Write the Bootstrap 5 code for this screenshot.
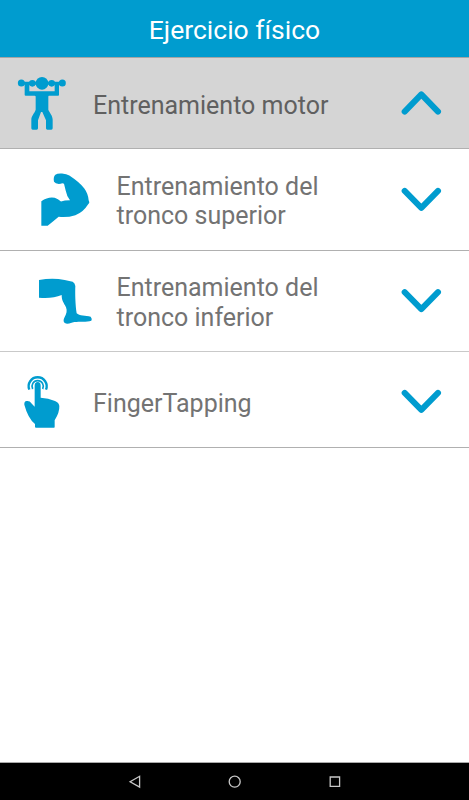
<!DOCTYPE html>
<html lang="es">
<head>
<meta charset="utf-8">
<meta name="viewport" content="width=device-width, initial-scale=1">
<title>Ejercicio físico</title>
<link rel="stylesheet" href="https://cdn.jsdelivr.net/npm/bootstrap@5.3.0/dist/css/bootstrap.min.css">
<style>
  :root { --brand: #009ccf; }
  body { font-family: Roboto, "Liberation Sans", sans-serif; background: #fff; }
  .app-title { height: 58px; background: var(--brand); border-bottom: 1px solid #a5a5a5; font-size: 26.5px; line-height: 30px; padding-top: 3px; }
  .menu-row { border-bottom: 1px solid #b0b0b0; font-size: 25px; line-height: 29.5px; color: #737373; padding: 0 18px 0 10px; }
  .menu-row svg { fill: var(--brand); flex: none; }
  .row-open { height: 91px; background: #d5d5d5; color: #606060; }
  .row-sub { height: 102px; padding-left: 32px; }
  .row-sub-last { height: 101px; border-bottom-color: #c9c9c9; }
  .row-last { height: 96px; padding-top: 4px; padding-left: 16px; }
  .row-open .menu-label { margin-left: 19px; padding-top: 5px; }
  .row-sub .menu-label { margin-left: 18.5px; width: 240px; padding-top: 3px; }
  .row-last .menu-label { margin-left: 23px; padding-top: 5px; }
  .menu-row svg.chevron { fill: none; stroke: var(--brand); stroke-width: 18; stroke-linecap: round; stroke-linejoin: round; }
  .sys-nav { height: 38px; background: #000; border-top: 1px solid #aaa; }
  .sys-nav svg { fill: none; stroke: #c8c8c8; stroke-width: 1.3; }
</style>
</head>
<body>
<div class="d-flex flex-column vh-100 overflow-hidden">
  <header class="app-title d-flex align-items-center justify-content-center text-white flex-shrink-0">Ejercicio físico</header>
  <main class="flex-grow-1">
    <div class="menu-row row-open d-flex align-items-center">
      <svg width="64" height="70" viewBox="0 -1 192 210">
        <ellipse cx="96" cy="45" rx="19" ry="19"/>
        <circle cx="34" cy="44" r="10.5"/><circle cx="67" cy="45" r="10"/>
        <circle cx="125" cy="45" r="10"/><circle cx="157" cy="44" r="10.5"/>
        <path d="M34 40h124v9H147V80q0 2-3 2H117q-2 0-2 3v39c4 9 13 18 13 30v26q0 4-4 4h-12q-4 0-4-4v-24L97 131h-4L84 156v24q0 4-4 4H68q-4 0-4-4v-26c0-12 9-18 13-30V85q0-3-3-3H47q-3 0-3-3V49H34zM58 49V69H134V49z"/>
      </svg>
      <span class="menu-label">Entrenamiento motor</span>
      <svg class="chevron ms-auto" width="60" height="50" viewBox="0 -4 180 150"><path d="M41 97 91 45l50 52"/></svg>
    </div>
    <div class="menu-row row-sub d-flex align-items-center">
      <svg width="66" height="66" viewBox="0 4.5 198 198">
        <path d="M28 107Q49 93 68 97q10 3 19 11 10-4 27-4-10-12-13-29l-5-20q-5-3-10 0-15 2-20-6-3-14 4-21 6-5 20-4 14 1 22 6 32 21 45 39 11 15 13 35l2 6q0 3-4 7-15 24-38 32-24 8-50 5Q67 165 47 181H28z"/>
      </svg>
      <span class="menu-label">Entrenamiento del tronco superior</span>
      <svg class="chevron ms-auto" width="60" height="50" viewBox="0 -1.5 180 150"><path d="M41 46 91 97l50-51"/></svg>
    </div>
    <div class="menu-row row-sub row-sub-last d-flex align-items-center">
      <svg width="66" height="60" viewBox="0 3 198 180">
        <path d="M21 30Q62 22 98 30l24 5q7 4 8 13c-1 21 0 56 4 82 7 7 28 8 42 10q5 6 2 12c-14 5-35 2-51 4-8 1-13 5-21 5-12-1-13-10-9-18 7-12 9-20 5-31C95 97 89 93 89 75 70 82 49 86 21 83z"/>
      </svg>
      <span class="menu-label">Entrenamiento del tronco inferior</span>
      <svg class="chevron ms-auto" width="60" height="50" viewBox="0 -2.5 180 150"><path d="M41 46 91 97l50-51"/></svg>
    </div>
    <div class="menu-row row-last d-flex align-items-center">
      <svg width="54" height="68" viewBox="0 1 162 204">
        <path d="M56 117V54q0-11 9-11t9 11v36q23 1 43 10 12 5 13 15 1 19-14 43v20q0 2-2 2H60q-3 0-3-3v-8Q36 152 25 111q-1-10 7-11 10-1 14 7z"/>
        <path d="M40 66A27 27 0 1 1 90 66" fill="none" stroke="#009ccf" stroke-width="7"/>
        <path d="M50 64A17 17 0 1 1 80 64" fill="none" stroke="#009ccf" stroke-width="5"/>
      </svg>
      <span class="menu-label">FingerTapping</span>
      <svg class="chevron ms-auto" width="60" height="50" viewBox="0 -1.5 180 150"><path d="M41 46 91 97l50-51"/></svg>
    </div>
  </main>
  <footer class="sys-nav d-flex align-items-center justify-content-center flex-shrink-0">
    <svg width="300" height="36" viewBox="0 0 300 36"><path d="M54.6 12.3v10.8L45.1 17.7z"/><circle cx="149.7" cy="17.7" r="5.5"/><path d="M245.2 13h9.4v9.4h-9.4z"/></svg>
  </footer>
</div>
<script src="https://cdn.jsdelivr.net/npm/bootstrap@5.3.0/dist/js/bootstrap.bundle.min.js"></script>
</body>
</html>
